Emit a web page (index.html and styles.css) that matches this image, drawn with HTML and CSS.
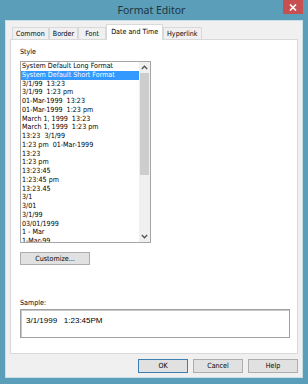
FILE: index.html
```html
<!DOCTYPE html>
<html>
<head>
<meta charset="utf-8">
<link rel="stylesheet" href="styles.css">
</head>
<body>
<div class="window">
  <div class="titlebar">
    <span></span>
    <span class="title">Format Editor</span>
    <span class="close"><svg width="8" height="7" viewBox="0 0 8 7"><path d="M1 0.5 L7 6.5 M7 0.5 L1 6.5" stroke="#fff" stroke-width="1.6"/></svg></span>
  </div>
  <div class="client">
    <div class="tabs">
      <div class="tab">Common</div>
      <div class="tab">Border</div>
      <div class="tab">Font</div>
      <div class="tab active">Date and Time</div>
      <div class="tab">Hyperlink</div>
    </div>
    <div class="panel">
      <div class="label">Style</div>
      <div class="list">
        <div class="items">
          <div class="item">System Default Long Format</div>
          <div class="item selected">System Default Short Format</div>
          <div class="item">3/1/99&nbsp; 13:23</div>
          <div class="item">3/1/99&nbsp; 1:23 pm</div>
          <div class="item">01-Mar-1999&nbsp; 13:23</div>
          <div class="item">01-Mar-1999&nbsp; 1:23 pm</div>
          <div class="item">March 1, 1999&nbsp; 13:23</div>
          <div class="item">March 1, 1999&nbsp; 1:23 pm</div>
          <div class="item">13:23&nbsp; 3/1/99</div>
          <div class="item">1:23 pm&nbsp; 01-Mar-1999</div>
          <div class="item">13:23</div>
          <div class="item">1:23 pm</div>
          <div class="item">13:23:45</div>
          <div class="item">1:23:45 pm</div>
          <div class="item">13:23.45</div>
          <div class="item">3/1</div>
          <div class="item">3/01</div>
          <div class="item">3/1/99</div>
          <div class="item">03/01/1999</div>
          <div class="item">1 - Mar</div>
          <div class="item">1-Mar-99</div>
        </div>
        <div class="scrollbar">
          <div class="arrow"><svg width="7" height="5" viewBox="0 0 7 5"><path d="M0.8 4 L3.5 1.2 L6.2 4" fill="none" stroke="#505050" stroke-width="1.3"/></svg></div>
          <div class="thumb"></div>
          <div class="track"></div>
          <div class="arrow"><svg width="7" height="5" viewBox="0 0 7 5"><path d="M0.8 1 L3.5 3.8 L6.2 1" fill="none" stroke="#505050" stroke-width="1.3"/></svg></div>
        </div>
      </div>
      <div class="btn customize">Customize...</div>
      <div class="label sample-label">Sample:</div>
      <div class="sample">3/1/1999   1:23:45PM</div>
    </div>
    <div class="buttons">
      <div class="btn default">OK</div>
      <div class="btn">Cancel</div>
      <div class="btn">Help</div>
    </div>
  </div>
</div>
</body>
</html>
```

FILE: styles.css
```css
html, body {
  margin: 0;
  padding: 0;
}
body {
  font-family: "DejaVu Sans Condensed", "DejaVu Sans", sans-serif;
  font-size: 7.1px;
  color: #000;
}
.window {
  width: 308px;
  height: 384px;
  background: #5a9eb9;
  display: flex;
  flex-direction: column;
  box-sizing: border-box;
}
.titlebar {
  height: 21px;
  flex: none;
  display: grid;
  grid-template-columns: 1fr auto 1fr;
  padding-right: 5px;
}
.title {
  font-family: "Noto Sans", "Open Sans", sans-serif;
  font-size: 10.5px;
  color: #1d3540;
  line-height: 21px;
  align-self: center;
}
.close {
  justify-self: end;
  width: 20px;
  height: 14px;
  background: #c75050;
  display: flex;
  align-items: center;
  justify-content: center;
}
.client {
  flex: 1;
  margin: 0 6px 7px 6px;
  background: #f0f0f0;
  padding: 4px 4px 4px 4px;
  display: flex;
  flex-direction: column;
  box-shadow: 0 0 0 1px #c9dfe8;
}
.tabs {
  display: flex;
  align-items: flex-end;
  padding-left: 2px;
  height: 14px;
  flex: none;
}
.tab {
  height: 11px;
  line-height: 11px;
  padding: 0 3px;
  min-width: 20px;
  text-align: center;
  border: 1px solid #d9d9d9;
  border-bottom: none;
  background: #f0f0f0;
  white-space: nowrap;
}
.tab.active {
  height: 15px;
  line-height: 14px;
  background: #fff;
  margin-bottom: -1px;
  position: relative;
  z-index: 1;
  padding: 0 4px;
}
.panel {
  flex: 1;
  background: #fff;
  border: 1px solid #d9d9d9;
  padding: 7px 9px 14px 9px;
  display: flex;
  flex-direction: column;
  align-items: flex-start;
}
.label {
  height: 9px;
  line-height: 9px;
}
.list {
  margin-top: 5px;
  width: 131px;
  height: 182px;
  box-sizing: border-box;
  border: 1px solid #a5a5a5;
  display: flex;
  overflow: hidden;
}
.items {
  flex: 1;
  overflow: hidden;
}
.item {
  height: 8.75px;
  line-height: 8.75px;
  padding-left: 1px;
  white-space: nowrap;
}
.item.selected {
  background: #3399ff;
  color: #fff;
}
.scrollbar {
  width: 11px;
  background: #f0f0f0;
  display: flex;
  flex-direction: column;
}
.arrow {
  height: 11px;
  display: flex;
  align-items: center;
  justify-content: center;
}
.thumb {
  height: 102px;
  background: #cdcdcd;
  margin: 0 1px;
}
.track {
  flex: 1;
}
.btn {
  box-sizing: border-box;
  height: 14px;
  line-height: 12px;
  text-align: center;
  background: #e1e1e1;
  border: 1px solid #adadad;
}
.customize {
  margin-top: 9px;
  width: 70px;
  height: 13px;
  line-height: 11px;
}
.sample-label {
  margin-top: 33px;
}
.sample {
  margin-top: 2px;
  width: 270px;
  height: 29px;
  box-sizing: border-box;
  border: 1px solid #a0a0a0;
  box-shadow: inset 1px 1px 0 #c8c8c8;
  padding: 6px 0 0 5px;
  white-space: pre;
  font-family: "Liberation Sans", Arial, sans-serif;
  font-size: 8px;
  line-height: 10px;
}
.buttons {
  margin-top: 5px;
  display: flex;
  justify-content: flex-end;
  gap: 5px;
  flex: none;
}
.buttons .btn {
  width: 50px;
}
.buttons .btn.default {
  border-color: #3c7fb1;
}
```
